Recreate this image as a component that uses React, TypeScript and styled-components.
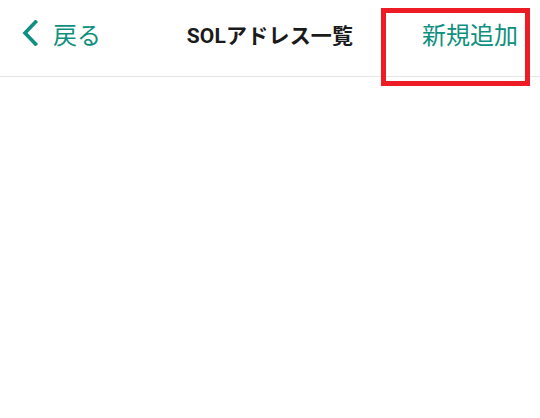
import React from 'react'
import styled, {createGlobalStyle} from 'styled-components'

const GlobalStyle = createGlobalStyle`
  html, body {
    margin: 0;
    padding: 0;
    background: #ffffff;
  }
  body {
    font-family: "Noto Sans CJK JP", "Noto Sans", sans-serif;
  }
`

const Page = styled.div`
  position: relative;
  width: 540px;
  height: 418px;
  background: #ffffff;
`

const Header = styled.header`
  display: grid;
  grid-template-columns: 1fr auto 1fr;
  align-items: center;
  height: 76px;
  border-bottom: 1px solid #e6e6e6;
  box-sizing: content-box;
`

const BackButton = styled.button`
  justify-self: start;
  display: flex;
  align-items: center;
  gap: 14px;
  padding: 0 0 10px 21px;
  border: 0;
  background: none;
  color: #0f8f80;
  font-family: "Noto Sans CJK JP", sans-serif;
  font-size: 24px;
  cursor: pointer;
`

const Title = styled.h1`
  margin: 0 0 8px;
  font-family: Roboto, "Noto Sans CJK JP", sans-serif;
  font-size: 21px;
  font-weight: 700;
  color: #1a1a1a;
  letter-spacing: 0.2px;
`

const AddButton = styled.button`
  justify-self: end;
  padding: 0 22px 10px 0;
  border: 0;
  background: none;
  color: #0f8f80;
  font-family: "Noto Sans CJK JP", sans-serif;
  font-size: 24px;
  cursor: pointer;
`

const Highlight = styled.div`
  position: absolute;
  top: 8px;
  left: 381px;
  width: 149px;
  height: 78px;
  box-sizing: border-box;
  border: 5px solid #ed1c24;
  pointer-events: none;
`

const Chevron = () => (
  <svg width="18" height="26" viewBox="0 0 18 26" fill="none">
    <path d="M14.5 2 L4 13 L14.5 24" stroke="#0f8f80" strokeWidth="3.6" strokeLinecap="square" />
  </svg>
)

const App: React.FC = () => {
  return (
    <Page>
      <GlobalStyle />
      <Header>
        <BackButton>
          <Chevron />
          戻る
        </BackButton>
        <Title>SOLアドレス一覧</Title>
        <AddButton>新規追加</AddButton>
      </Header>
      <Highlight />
    </Page>
  )
}

export default App
